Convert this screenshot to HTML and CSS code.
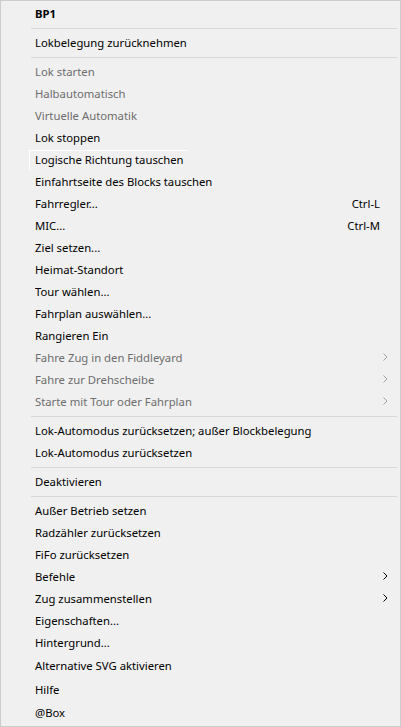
FILE: index.html
```html
<!DOCTYPE html>
<html>
<head>
<meta charset="utf-8">
<link rel="stylesheet" href="styles.css">
</head>
<body>
<div class="menu">
  <div class="item title">BP1</div>
  <div class="sep"></div>
  <div class="item">Lokbelegung zurücknehmen</div>
  <div class="sep"></div>
  <div class="item disabled">Lok starten</div>
  <div class="item disabled">Halbautomatisch</div>
  <div class="item disabled">Virtuelle Automatik</div>
  <div class="item">Lok stoppen</div>
  <div class="item focus">Logische Richtung tauschen</div>
  <div class="item">Einfahrtseite des Blocks tauschen</div>
  <div class="item"><span class="label">Fahrregler...</span><span class="key">Ctrl-L</span></div>
  <div class="item"><span class="label">MIC...</span><span class="key">Ctrl-M</span></div>
  <div class="item">Ziel setzen...</div>
  <div class="item">Heimat-Standort</div>
  <div class="item">Tour wählen...</div>
  <div class="item">Fahrplan auswählen...</div>
  <div class="item">Rangieren Ein</div>
  <div class="item disabled"><span class="label">Fahre Zug in den Fiddleyard</span><svg class="arrow" width="5" height="8" viewBox="0 0 5 8"><path d="M0.5 0.5 L4 4 L0.5 7.5" fill="none" stroke="currentColor" stroke-width="1"/></svg></div>
  <div class="item disabled"><span class="label">Fahre zur Drehscheibe</span><svg class="arrow" width="5" height="8" viewBox="0 0 5 8"><path d="M0.5 0.5 L4 4 L0.5 7.5" fill="none" stroke="currentColor" stroke-width="1"/></svg></div>
  <div class="item disabled"><span class="label">Starte mit Tour oder Fahrplan</span><svg class="arrow" width="5" height="8" viewBox="0 0 5 8"><path d="M0.5 0.5 L4 4 L0.5 7.5" fill="none" stroke="currentColor" stroke-width="1"/></svg></div>
  <div class="sep"></div>
  <div class="item">Lok-Automodus zurücksetzen; außer Blockbelegung</div>
  <div class="item">Lok-Automodus zurücksetzen</div>
  <div class="sep"></div>
  <div class="item">Deaktivieren</div>
  <div class="sep"></div>
  <div class="item">Außer Betrieb setzen</div>
  <div class="item">Radzähler zurücksetzen</div>
  <div class="item">FiFo zurücksetzen</div>
  <div class="item"><span class="label">Befehle</span><svg class="arrow" width="5" height="8" viewBox="0 0 5 8"><path d="M0.5 0.5 L4 4 L0.5 7.5" fill="none" stroke="currentColor" stroke-width="1"/></svg></div>
  <div class="item"><span class="label">Zug zusammenstellen</span><svg class="arrow" width="5" height="8" viewBox="0 0 5 8"><path d="M0.5 0.5 L4 4 L0.5 7.5" fill="none" stroke="currentColor" stroke-width="1"/></svg></div>
  <div class="item">Eigenschaften...</div>
  <div class="item">Hintergrund...</div>
  <div class="item tall">Alternative SVG aktivieren</div>
  <div class="item tall">Hilfe</div>
  <div class="item">@Box</div>
</div>
</body>
</html>
```
FILE: styles.css
```css
html, body {
  margin: 0;
  padding: 0;
  background: #f0f0f0;
}
.menu {
  box-sizing: border-box;
  width: 401px;
  height: 727px;
  border: 1px solid #cccccc;
  background: #f0f0f0;
  padding: 2px 0;
  font-family: "Noto Sans", "Segoe UI", sans-serif;
  font-size: 11.3px;
  color: #000;
  display: flex;
  flex-direction: column;
}
.item {
  box-sizing: border-box;
  position: relative;
  height: 22px;
  flex: none;
  display: flex;
  align-items: center;
  padding: 0 11px 2px 34px;
  white-space: nowrap;
}
.item.tall {
  height: 24px;
}
.title {
  font-weight: bold;
}
.disabled {
  color: #6d6d6d;
}
.label {
  flex: 1;
}
.key {
  margin-right: 9px;
}
.arrow {
  margin-right: 1px;
}
.disabled .arrow {
  color: #a0a0a0;
}
.sep {
  flex: none;
  height: 1px;
  margin: 3px 3px 3px 30px;
  background: #d7d7d7;
}
.focus::before {
  content: "";
  position: absolute;
  left: 28px;
  top: 1px;
  width: 158px;
  height: 19px;
  border-top: 1px solid #ffffff;
  border-left: 1px solid #ffffff;
}
```
